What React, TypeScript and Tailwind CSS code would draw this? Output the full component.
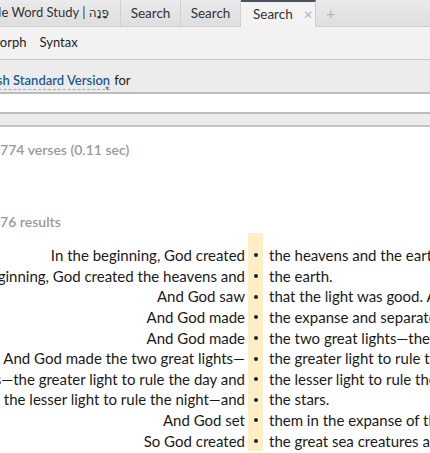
import React from 'react';

const rows: [string, string][] = [
  ['In the beginning, God created', 'the heavens and the earth.'],
  ['In the beginning, God created the heavens and', 'the earth.'],
  ['And God saw', 'that the light was good. And God separated'],
  ['And God made', 'the expanse and separated the waters'],
  ['And God made', 'the two great lights—the greater light'],
  ['And God made the two great lights—', 'the greater light to rule the day'],
  ['And God made the two great lights—the greater light to rule the day and', 'the lesser light to rule the night'],
  ['the greater light to rule the day and the lesser light to rule the night—and', 'the stars.'],
  ['And God set', 'them in the expanse of the heavens'],
  ['So God created', 'the great sea creatures and every'],
];

const font = { fontFamily: 'Lato, "DejaVu Sans", sans-serif' };

export default function App() {
  return (
    <div className="w-[430px] h-[453px] overflow-hidden bg-white text-[#1a1a1a]" style={font}>
      {/* tab strip */}
      <div className="h-[27px] flex items-stretch bg-gradient-to-b from-[#ebebeb] to-[#dedede] border-b border-[#cfcfcf] text-[13.5px] text-[#333]">
        <div className="w-[121px] shrink-0 overflow-hidden flex items-center justify-end border-r border-[#d0d0d0] pr-[11px]">
          <span className="whitespace-nowrap text-[13px]">Bible Word Study | <span className="text-[12px]" style={{ fontFamily: '"DejaVu Sans", sans-serif' }}>פָּנָה</span></span>
        </div>
        <div className="w-[60px] shrink-0 flex items-center justify-center border-r border-[#d0d0d0]">Search</div>
        <div className="w-[60px] shrink-0 flex items-center justify-center border-r border-[#d0d0d0]">Search</div>
        <div className="w-[75px] shrink-0 flex items-center pl-[12px] gap-[11px] bg-[#f3f3f3] border-t-[2px] border-[#4a5260] -mb-px border-r border-r-[#d0d0d0]">
          <span>Search</span>
          <span className="text-[#b5b5b5] text-[15px] leading-none">×</span>
        </div>
        <div className="pl-[10px] flex items-center text-[#b5b5b5] text-[16px]">+</div>
      </div>

      {/* panel toolbar */}
      <div className="h-[33px] bg-[#f2f2f2] border-b border-[#c8c8c8] flex items-center text-[13px] text-[#222]">
        <span className="-ml-[12px]">Morph</span>
        <span className="ml-[13px]">Syntax</span>
      </div>

      {/* search scope */}
      <div className="h-[34px] bg-[#ececec] border-b-2 border-[#bdbdbd] flex items-end pb-[2px] text-[13px]">
        <span className="-ml-[31px] relative font-semibold text-[#235a8c] border-b border-dashed border-[#9bb1c6] leading-[18px]">
          English Standard Version
          <span className="absolute right-[1px] -bottom-[8px] text-[5px] text-[#777]">▼</span>
        </span>
        <span className="ml-[4px] text-[#222] leading-[18px] pb-px">for</span>
      </div>

      {/* input */}
      <div className="h-[20px] bg-white border-b-2 border-[#bdbdbd]" />
      <div className="h-[13px] bg-[#ececec] border-b-2 border-[#c4c4c4]" />

      <div className="pt-[11px] text-[14px] text-[#9a9a9a] font-semibold h-[45px] flex items-start">
        <span className="-ml-[8px] mt-[1px]">1774 verses (0.11 sec)</span>
      </div>

      <div className="h-[71px] pt-[39px] text-[14px] text-[#9a9a9a] font-semibold">
        <span className="-ml-[8px] block">276 results</span>
      </div>

      <div className="flex">
        <div className="w-[248px] shrink-0 overflow-hidden pt-[2px]">
          {rows.map(([l], i) => (
            <div key={i} className="h-[20.65px] text-[15px] leading-[20.65px] whitespace-nowrap flex justify-end pr-[3px]">
              {l}
            </div>
          ))}
        </div>
        <div className="w-[15px] shrink-0 bg-[#fdeec6] -mt-[10px] pt-[12px]">
          {rows.map((_, i) => (
            <div key={i} className="h-[20.65px] flex items-center justify-center">
              <span className="w-[4px] h-[4px] rounded-full bg-[#222]" />
            </div>
          ))}
        </div>
        <div className="flex-1 overflow-hidden pl-[6px] pt-[2px]">
          {rows.map(([, r], i) => (
            <div key={i} className="h-[20.65px] text-[15px] leading-[20.65px] whitespace-nowrap">
              {r}
            </div>
          ))}
        </div>
      </div>
    </div>
  );
}
